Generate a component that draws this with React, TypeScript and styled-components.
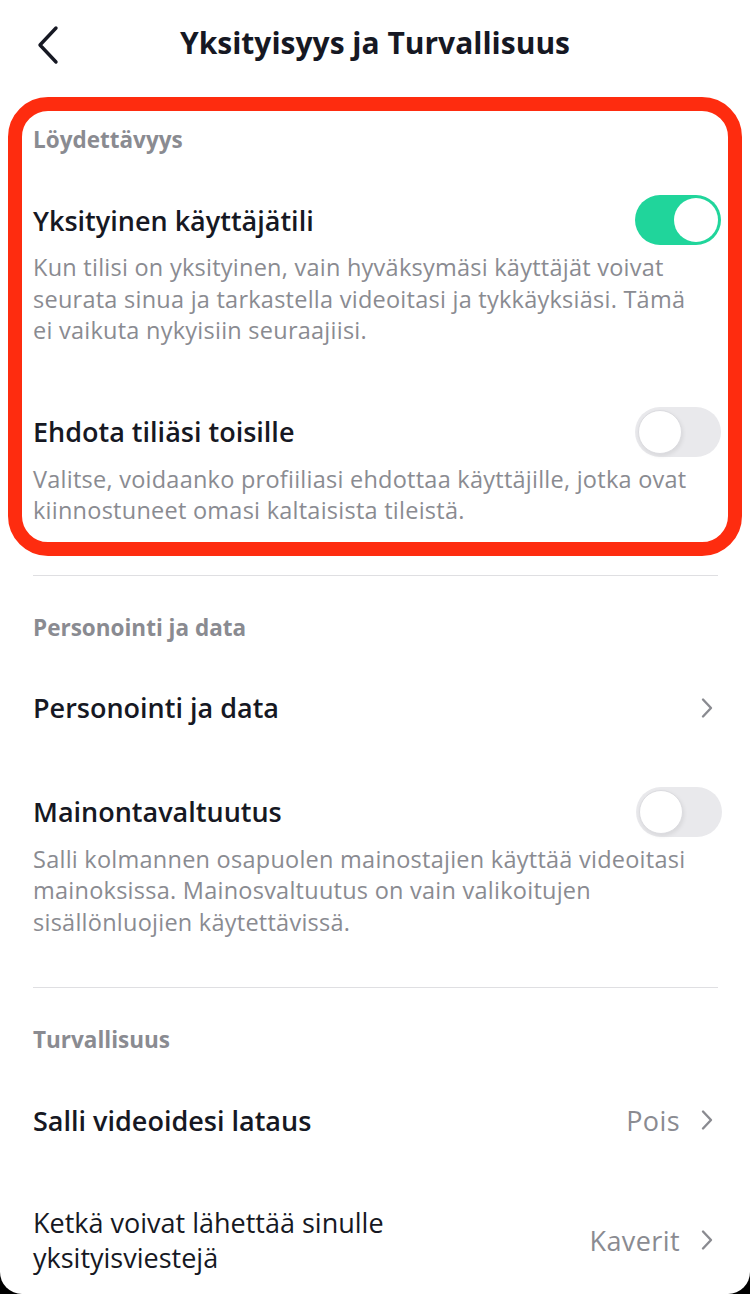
import React from "react";
import styled, { createGlobalStyle } from "styled-components";

const GlobalStyle = createGlobalStyle`
  html, body {
    margin: 0;
    padding: 0;
    background: #000;
  }
  body {
    font-family: "Open Sans", "Liberation Sans", sans-serif;
    -webkit-font-smoothing: antialiased;
  }
`;

const Screen = styled.div`
  width: 750px;
  height: 1294px;
  overflow: hidden;
  background: #fff;
  border-radius: 0 0 22px 22px;
  color: #161823;
`;

const TopBar = styled.header`
  position: relative;
  height: 86px;
  display: flex;
  align-items: center;
  justify-content: center;
`;

const BackButton = styled.button`
  position: absolute;
  left: 30px;
  top: 23px;
  width: 34px;
  height: 44px;
  padding: 0;
  border: none;
  background: none;
  display: grid;
  place-items: center;
  color: #161823;
`;

const Title = styled.h1`
  margin: 0;
  font-size: 30px;
  font-weight: 700;
  line-height: 86px;
`;

const Highlight = styled.section`
  margin: 11px 8px 0;
  border: 14px solid #fe2c0f;
  border-radius: 40px;
  padding: 15px 11px 9px;
`;

const Section = styled.section`
  padding: 38px 32px 0 33px;
`;

const SectionHeader = styled.h2`
  margin: 0;
  font-size: 22.5px;
  line-height: 28px;
  font-weight: 700;
  color: #8a8b91;
`;

const List = styled.div<{ $bottom?: number; $gap?: number }>`
  display: flex;
  flex-direction: column;
  gap: ${(p) => p.$gap ?? 54}px;
  margin-top: 41px;
  padding-bottom: ${(p) => p.$bottom ?? 0}px;
`;

const Item = styled.div`
  display: flex;
  flex-direction: column;
`;

const Row = styled.div`
  min-height: 50px;
  display: flex;
  align-items: center;
  justify-content: space-between;
  gap: 20px;
`;

const RowLabel = styled.span<{ $light?: boolean }>`
  font-size: 27px;
  line-height: 35px;
  font-weight: ${(p) => (p.$light ? 500 : 600)};
  color: #161823;
  max-width: 420px;
`;

const Description = styled.p`
  margin: 7px 0 0;
  padding-bottom: 6px;
  font-size: 23.5px;
  line-height: 31.5px;
  letter-spacing: 0.25px;
  color: #8a8b91;
  padding-right: 12px;
`;

const Trailing = styled.span`
  display: flex;
  align-items: center;
  gap: 20px;
  font-size: 27px;
  letter-spacing: 0.4px;
  color: #8a8b91;
  padding-right: 4px;
`;

const Divider = styled.hr`
  margin: 19px 32px 0 33px;
  border: none;
  height: 1px;
  background: #dfdfe2;
`;

const Track = styled.span<{ $on: boolean }>`
  flex: 0 0 auto;
  position: relative;
  width: 86px;
  height: 50px;
  border-radius: 25px;
  background: ${(p) => (p.$on ? "#20d59b" : "#e9e9ec")};
  margin-right: -4px;
`;

const Knob = styled.span<{ $on: boolean }>`
  position: absolute;
  top: 3px;
  left: ${(p) => (p.$on ? "39px" : "3px")};
  width: 44px;
  height: 44px;
  border-radius: 50%;
  background: #fff;
  box-sizing: border-box;
  border: ${(p) => (p.$on ? "none" : "1px solid #dcdce0")};
  box-shadow: ${(p) => (p.$on ? "none" : "1px 2px 4px rgba(0,0,0,0.08)")};
`;

const Toggle = ({ on }: { on: boolean }) => (
  <Track $on={on}>
    <Knob $on={on} />
  </Track>
);

const Chevron = () => (
  <svg width="14" height="22" viewBox="0 0 14 22" fill="none">
    <path d="M3 2.5 L11 11 L3 19.5" stroke="#8a8b91" strokeWidth="2.4" strokeLinecap="round" strokeLinejoin="round" />
  </svg>
);

const BackIcon = () => (
  <svg width="26" height="40" viewBox="0 0 26 40" fill="none">
    <path d="M22 3 L6 20 L22 37" stroke="#161823" strokeWidth="3.4" strokeLinecap="round" strokeLinejoin="round" />
  </svg>
);

export default function App() {
  return (
    <>
      <GlobalStyle />
      <Screen>
        <TopBar>
          <BackButton type="button" aria-label="Takaisin">
            <BackIcon />
          </BackButton>
          <Title>Yksityisyys ja Turvallisuus</Title>
        </TopBar>

        <Highlight>
          <SectionHeader>Löydettävyys</SectionHeader>
          <List>
            <Item>
              <Row>
                <RowLabel>Yksityinen käyttäjätili</RowLabel>
                <Toggle on />
              </Row>
              <Description>
                Kun tilisi on yksityinen, vain hyväksymäsi käyttäjät voivat
                seurata sinua ja tarkastella videoitasi ja tykkäyksiäsi. Tämä
                ei vaikuta nykyisiin seuraajiisi.
              </Description>
            </Item>
            <Item>
              <Row>
                <RowLabel>Ehdota tiliäsi toisille</RowLabel>
                <Toggle on={false} />
              </Row>
              <Description>
                Valitse, voidaanko profiiliasi ehdottaa käyttäjille, jotka ovat
                kiinnostuneet omasi kaltaisista tileistä.
              </Description>
            </Item>
          </List>
        </Highlight>

        <Divider />

        <Section>
          <SectionHeader>Personointi ja data</SectionHeader>
          <List $bottom={24}>
            <Row>
              <RowLabel>Personointi ja data</RowLabel>
              <Trailing>
                <Chevron />
              </Trailing>
            </Row>
            <Item>
              <Row>
                <RowLabel>Mainontavaltuutus</RowLabel>
                <Toggle on={false} />
              </Row>
              <Description>
                Salli kolmannen osapuolen mainostajien käyttää videoitasi
                mainoksissa. Mainosvaltuutus on vain valikoitujen
                sisällönluojien käytettävissä.
              </Description>
            </Item>
          </List>
        </Section>

        <Divider />

        <Section>
          <SectionHeader>Turvallisuus</SectionHeader>
          <List $gap={60}>
            <Row>
              <RowLabel>Salli videoidesi lataus</RowLabel>
              <Trailing>
                Pois
                <Chevron />
              </Trailing>
            </Row>
            <Row>
              <RowLabel $light>Ketkä voivat lähettää sinulle yksityisviestejä</RowLabel>
              <Trailing>
                Kaverit
                <Chevron />
              </Trailing>
            </Row>
          </List>
        </Section>
      </Screen>
    </>
  );
}
